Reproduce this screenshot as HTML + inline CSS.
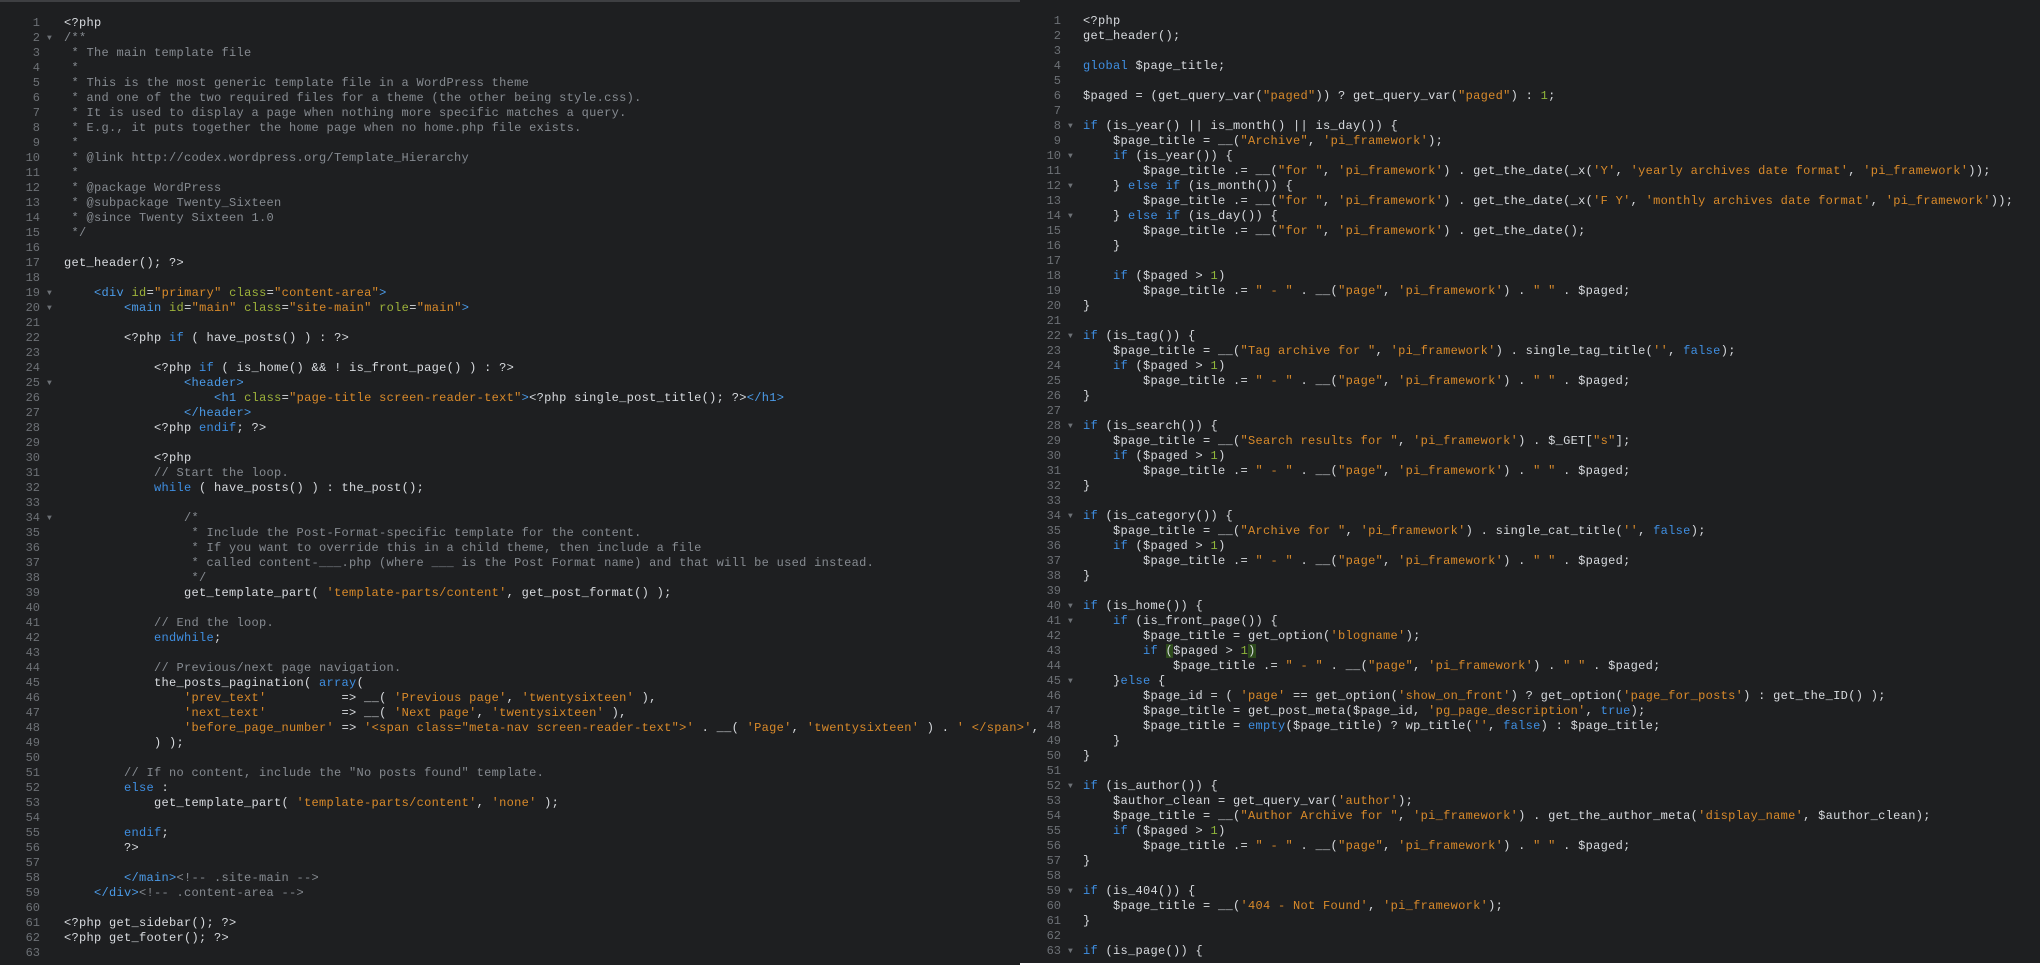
<!DOCTYPE html>
<html><head><meta charset="utf-8"><style>
html,body{margin:0;padding:0;background:#1e1f21;width:2040px;height:965px;overflow:hidden}
.pane{position:absolute;top:0;font-family:"Liberation Mono",monospace;font-size:12px;letter-spacing:0.3px;line-height:15px;color:#d8dbdf}
#L{left:0;width:1020px;height:965px;border-top:2px solid #3e3f42;box-sizing:border-box;padding-top:14px}
#R{left:1020px;width:1020px;height:964px;padding-top:14px;box-sizing:border-box}
#wb{position:absolute;left:1020px;top:963px;width:1020px;height:2px;background:#fff}
.r{position:relative;height:15px}
.g{position:absolute;width:40px;text-align:right;color:#6d7176;top:0;letter-spacing:0}
.f{position:absolute;color:#6d7176;font-size:8px;top:0}
.c0{position:absolute;top:0;white-space:pre}
#L .g{left:0}#L .f{left:47px}#L .c0{left:64px}
#R .g{left:0;width:41px}#R .f{left:48px}#R .c0{left:63px}
.k{color:#3f8fe2}.s{color:#d98a2a}.n{color:#8fb53a}.c{color:#868b91}.a{color:#9db23a}.t{color:#4b9be8}
.h{background:#2d4a1c}
</style></head><body>
<div class="pane" id="L">
<div class="r"><span class="g">1</span><span class="c0">&lt;?php</span></div>
<div class="r"><span class="g">2</span><span class="f">▼</span><span class="c0 c">/**</span></div>
<div class="r"><span class="g">3</span><span class="c0 c"> * The main template file</span></div>
<div class="r"><span class="g">4</span><span class="c0 c"> *</span></div>
<div class="r"><span class="g">5</span><span class="c0 c"> * This is the most generic template file in a WordPress theme</span></div>
<div class="r"><span class="g">6</span><span class="c0 c"> * and one of the two required files for a theme (the other being style.css).</span></div>
<div class="r"><span class="g">7</span><span class="c0 c"> * It is used to display a page when nothing more specific matches a query.</span></div>
<div class="r"><span class="g">8</span><span class="c0 c"> * E.g., it puts together the home page when no home.php file exists.</span></div>
<div class="r"><span class="g">9</span><span class="c0 c"> *</span></div>
<div class="r"><span class="g">10</span><span class="c0 c"> * @link http://codex.wordpress.org/Template_Hierarchy</span></div>
<div class="r"><span class="g">11</span><span class="c0 c"> *</span></div>
<div class="r"><span class="g">12</span><span class="c0 c"> * @package WordPress</span></div>
<div class="r"><span class="g">13</span><span class="c0 c"> * @subpackage Twenty_Sixteen</span></div>
<div class="r"><span class="g">14</span><span class="c0 c"> * @since Twenty Sixteen 1.0</span></div>
<div class="r"><span class="g">15</span><span class="c0 c"> */</span></div>
<div class="r"><span class="g">16</span></div>
<div class="r"><span class="g">17</span><span class="c0">get_header(); ?&gt;</span></div>
<div class="r"><span class="g">18</span></div>
<div class="r"><span class="g">19</span><span class="f">▼</span><span class="c0">    <span class="t">&lt;div</span> <span class="a">id</span>=<span class="s">"primary"</span> <span class="a">class</span>=<span class="s">"content-area"</span><span class="t">&gt;</span></span></div>
<div class="r"><span class="g">20</span><span class="f">▼</span><span class="c0">        <span class="t">&lt;main</span> <span class="a">id</span>=<span class="s">"main"</span> <span class="a">class</span>=<span class="s">"site-main"</span> <span class="a">role</span>=<span class="s">"main"</span><span class="t">&gt;</span></span></div>
<div class="r"><span class="g">21</span></div>
<div class="r"><span class="g">22</span><span class="c0">        &lt;?php <span class="k">if</span> ( have_posts() ) : ?&gt;</span></div>
<div class="r"><span class="g">23</span></div>
<div class="r"><span class="g">24</span><span class="c0">            &lt;?php <span class="k">if</span> ( is_home() &amp;&amp; ! is_front_page() ) : ?&gt;</span></div>
<div class="r"><span class="g">25</span><span class="f">▼</span><span class="c0">                <span class="t">&lt;header&gt;</span></span></div>
<div class="r"><span class="g">26</span><span class="c0">                    <span class="t">&lt;h1</span> <span class="a">class</span>=<span class="s">"page-title screen-reader-text"</span><span class="t">&gt;</span>&lt;?php single_post_title(); ?&gt;<span class="t">&lt;/h1&gt;</span></span></div>
<div class="r"><span class="g">27</span><span class="c0">                <span class="t">&lt;/header&gt;</span></span></div>
<div class="r"><span class="g">28</span><span class="c0">            &lt;?php <span class="k">endif</span>; ?&gt;</span></div>
<div class="r"><span class="g">29</span></div>
<div class="r"><span class="g">30</span><span class="c0">            &lt;?php</span></div>
<div class="r"><span class="g">31</span><span class="c0 c">            // Start the loop.</span></div>
<div class="r"><span class="g">32</span><span class="c0">            <span class="k">while</span> ( have_posts() ) : the_post();</span></div>
<div class="r"><span class="g">33</span></div>
<div class="r"><span class="g">34</span><span class="f">▼</span><span class="c0 c">                /*</span></div>
<div class="r"><span class="g">35</span><span class="c0 c">                 * Include the Post-Format-specific template for the content.</span></div>
<div class="r"><span class="g">36</span><span class="c0 c">                 * If you want to override this in a child theme, then include a file</span></div>
<div class="r"><span class="g">37</span><span class="c0 c">                 * called content-___.php (where ___ is the Post Format name) and that will be used instead.</span></div>
<div class="r"><span class="g">38</span><span class="c0 c">                 */</span></div>
<div class="r"><span class="g">39</span><span class="c0">                get_template_part( <span class="s">'template-parts/content'</span>, get_post_format() );</span></div>
<div class="r"><span class="g">40</span></div>
<div class="r"><span class="g">41</span><span class="c0 c">            // End the loop.</span></div>
<div class="r"><span class="g">42</span><span class="c0">            <span class="k">endwhile</span>;</span></div>
<div class="r"><span class="g">43</span></div>
<div class="r"><span class="g">44</span><span class="c0 c">            // Previous/next page navigation.</span></div>
<div class="r"><span class="g">45</span><span class="c0">            the_posts_pagination( <span class="k">array</span>(</span></div>
<div class="r"><span class="g">46</span><span class="c0">                <span class="s">'prev_text'</span>          =&gt; __( <span class="s">'Previous page'</span>, <span class="s">'twentysixteen'</span> ),</span></div>
<div class="r"><span class="g">47</span><span class="c0">                <span class="s">'next_text'</span>          =&gt; __( <span class="s">'Next page'</span>, <span class="s">'twentysixteen'</span> ),</span></div>
<div class="r"><span class="g">48</span><span class="c0">                <span class="s">'before_page_number'</span> =&gt; <span class="s">'&lt;span class="meta-nav screen-reader-text"&gt;'</span> . __( <span class="s">'Page'</span>, <span class="s">'twentysixteen'</span> ) . <span class="s">' &lt;/span&gt;'</span>,</span></div>
<div class="r"><span class="g">49</span><span class="c0">            ) );</span></div>
<div class="r"><span class="g">50</span></div>
<div class="r"><span class="g">51</span><span class="c0 c">        // If no content, include the "No posts found" template.</span></div>
<div class="r"><span class="g">52</span><span class="c0">        <span class="k">else</span> :</span></div>
<div class="r"><span class="g">53</span><span class="c0">            get_template_part( <span class="s">'template-parts/content'</span>, <span class="s">'none'</span> );</span></div>
<div class="r"><span class="g">54</span></div>
<div class="r"><span class="g">55</span><span class="c0">        <span class="k">endif</span>;</span></div>
<div class="r"><span class="g">56</span><span class="c0">        ?&gt;</span></div>
<div class="r"><span class="g">57</span></div>
<div class="r"><span class="g">58</span><span class="c0">        <span class="t">&lt;/main&gt;</span><span class="c">&lt;!-- .site-main --&gt;</span></span></div>
<div class="r"><span class="g">59</span><span class="c0">    <span class="t">&lt;/div&gt;</span><span class="c">&lt;!-- .content-area --&gt;</span></span></div>
<div class="r"><span class="g">60</span></div>
<div class="r"><span class="g">61</span><span class="c0">&lt;?php get_sidebar(); ?&gt;</span></div>
<div class="r"><span class="g">62</span><span class="c0">&lt;?php get_footer(); ?&gt;</span></div>
<div class="r"><span class="g">63</span></div>
</div>

<div class="pane" id="R">
<div class="r"><span class="g">1</span><span class="c0">&lt;?php</span></div>
<div class="r"><span class="g">2</span><span class="c0">get_header();</span></div>
<div class="r"><span class="g">3</span></div>
<div class="r"><span class="g">4</span><span class="c0"><span class="k">global</span> $page_title;</span></div>
<div class="r"><span class="g">5</span></div>
<div class="r"><span class="g">6</span><span class="c0">$paged = (get_query_var(<span class="s">"paged"</span>)) ? get_query_var(<span class="s">"paged"</span>) : <span class="n">1</span>;</span></div>
<div class="r"><span class="g">7</span></div>
<div class="r"><span class="g">8</span><span class="f">▼</span><span class="c0"><span class="k">if</span> (is_year() || is_month() || is_day()) {</span></div>
<div class="r"><span class="g">9</span><span class="c0">    $page_title = __(<span class="s">"Archive"</span>, <span class="s">'pi_framework'</span>);</span></div>
<div class="r"><span class="g">10</span><span class="f">▼</span><span class="c0">    <span class="k">if</span> (is_year()) {</span></div>
<div class="r"><span class="g">11</span><span class="c0">        $page_title .= __(<span class="s">"for "</span>, <span class="s">'pi_framework'</span>) . get_the_date(_x(<span class="s">'Y'</span>, <span class="s">'yearly archives date format'</span>, <span class="s">'pi_framework'</span>));</span></div>
<div class="r"><span class="g">12</span><span class="f">▼</span><span class="c0">    } <span class="k">else if</span> (is_month()) {</span></div>
<div class="r"><span class="g">13</span><span class="c0">        $page_title .= __(<span class="s">"for "</span>, <span class="s">'pi_framework'</span>) . get_the_date(_x(<span class="s">'F Y'</span>, <span class="s">'monthly archives date format'</span>, <span class="s">'pi_framework'</span>));</span></div>
<div class="r"><span class="g">14</span><span class="f">▼</span><span class="c0">    } <span class="k">else if</span> (is_day()) {</span></div>
<div class="r"><span class="g">15</span><span class="c0">        $page_title .= __(<span class="s">"for "</span>, <span class="s">'pi_framework'</span>) . get_the_date();</span></div>
<div class="r"><span class="g">16</span><span class="c0">    }</span></div>
<div class="r"><span class="g">17</span></div>
<div class="r"><span class="g">18</span><span class="c0">    <span class="k">if</span> ($paged &gt; <span class="n">1</span>)</span></div>
<div class="r"><span class="g">19</span><span class="c0">        $page_title .= <span class="s">" - "</span> . __(<span class="s">"page"</span>, <span class="s">'pi_framework'</span>) . <span class="s">" "</span> . $paged;</span></div>
<div class="r"><span class="g">20</span><span class="c0">}</span></div>
<div class="r"><span class="g">21</span></div>
<div class="r"><span class="g">22</span><span class="f">▼</span><span class="c0"><span class="k">if</span> (is_tag()) {</span></div>
<div class="r"><span class="g">23</span><span class="c0">    $page_title = __(<span class="s">"Tag archive for "</span>, <span class="s">'pi_framework'</span>) . single_tag_title(<span class="s">''</span>, <span class="k">false</span>);</span></div>
<div class="r"><span class="g">24</span><span class="c0">    <span class="k">if</span> ($paged &gt; <span class="n">1</span>)</span></div>
<div class="r"><span class="g">25</span><span class="c0">        $page_title .= <span class="s">" - "</span> . __(<span class="s">"page"</span>, <span class="s">'pi_framework'</span>) . <span class="s">" "</span> . $paged;</span></div>
<div class="r"><span class="g">26</span><span class="c0">}</span></div>
<div class="r"><span class="g">27</span></div>
<div class="r"><span class="g">28</span><span class="f">▼</span><span class="c0"><span class="k">if</span> (is_search()) {</span></div>
<div class="r"><span class="g">29</span><span class="c0">    $page_title = __(<span class="s">"Search results for "</span>, <span class="s">'pi_framework'</span>) . $_GET[<span class="s">"s"</span>];</span></div>
<div class="r"><span class="g">30</span><span class="c0">    <span class="k">if</span> ($paged &gt; <span class="n">1</span>)</span></div>
<div class="r"><span class="g">31</span><span class="c0">        $page_title .= <span class="s">" - "</span> . __(<span class="s">"page"</span>, <span class="s">'pi_framework'</span>) . <span class="s">" "</span> . $paged;</span></div>
<div class="r"><span class="g">32</span><span class="c0">}</span></div>
<div class="r"><span class="g">33</span></div>
<div class="r"><span class="g">34</span><span class="f">▼</span><span class="c0"><span class="k">if</span> (is_category()) {</span></div>
<div class="r"><span class="g">35</span><span class="c0">    $page_title = __(<span class="s">"Archive for "</span>, <span class="s">'pi_framework'</span>) . single_cat_title(<span class="s">''</span>, <span class="k">false</span>);</span></div>
<div class="r"><span class="g">36</span><span class="c0">    <span class="k">if</span> ($paged &gt; <span class="n">1</span>)</span></div>
<div class="r"><span class="g">37</span><span class="c0">        $page_title .= <span class="s">" - "</span> . __(<span class="s">"page"</span>, <span class="s">'pi_framework'</span>) . <span class="s">" "</span> . $paged;</span></div>
<div class="r"><span class="g">38</span><span class="c0">}</span></div>
<div class="r"><span class="g">39</span></div>
<div class="r"><span class="g">40</span><span class="f">▼</span><span class="c0"><span class="k">if</span> (is_home()) {</span></div>
<div class="r"><span class="g">41</span><span class="f">▼</span><span class="c0">    <span class="k">if</span> (is_front_page()) {</span></div>
<div class="r"><span class="g">42</span><span class="c0">        $page_title = get_option(<span class="s">'blogname'</span>);</span></div>
<div class="r"><span class="g">43</span><span class="c0">        <span class="k">if</span> <span class="h">(</span>$paged &gt; <span class="n">1</span><span class="h">)</span></span></div>
<div class="r"><span class="g">44</span><span class="c0">            $page_title .= <span class="s">" - "</span> . __(<span class="s">"page"</span>, <span class="s">'pi_framework'</span>) . <span class="s">" "</span> . $paged;</span></div>
<div class="r"><span class="g">45</span><span class="f">▼</span><span class="c0">    }<span class="k">else</span> {</span></div>
<div class="r"><span class="g">46</span><span class="c0">        $page_id = ( <span class="s">'page'</span> == get_option(<span class="s">'show_on_front'</span>) ? get_option(<span class="s">'page_for_posts'</span>) : get_the_ID() );</span></div>
<div class="r"><span class="g">47</span><span class="c0">        $page_title = get_post_meta($page_id, <span class="s">'pg_page_description'</span>, <span class="k">true</span>);</span></div>
<div class="r"><span class="g">48</span><span class="c0">        $page_title = <span class="k">empty</span>($page_title) ? wp_title(<span class="s">''</span>, <span class="k">false</span>) : $page_title;</span></div>
<div class="r"><span class="g">49</span><span class="c0">    }</span></div>
<div class="r"><span class="g">50</span><span class="c0">}</span></div>
<div class="r"><span class="g">51</span></div>
<div class="r"><span class="g">52</span><span class="f">▼</span><span class="c0"><span class="k">if</span> (is_author()) {</span></div>
<div class="r"><span class="g">53</span><span class="c0">    $author_clean = get_query_var(<span class="s">'author'</span>);</span></div>
<div class="r"><span class="g">54</span><span class="c0">    $page_title = __(<span class="s">"Author Archive for "</span>, <span class="s">'pi_framework'</span>) . get_the_author_meta(<span class="s">'display_name'</span>, $author_clean);</span></div>
<div class="r"><span class="g">55</span><span class="c0">    <span class="k">if</span> ($paged &gt; <span class="n">1</span>)</span></div>
<div class="r"><span class="g">56</span><span class="c0">        $page_title .= <span class="s">" - "</span> . __(<span class="s">"page"</span>, <span class="s">'pi_framework'</span>) . <span class="s">" "</span> . $paged;</span></div>
<div class="r"><span class="g">57</span><span class="c0">}</span></div>
<div class="r"><span class="g">58</span></div>
<div class="r"><span class="g">59</span><span class="f">▼</span><span class="c0"><span class="k">if</span> (is_404()) {</span></div>
<div class="r"><span class="g">60</span><span class="c0">    $page_title = __(<span class="s">'404 - Not Found'</span>, <span class="s">'pi_framework'</span>);</span></div>
<div class="r"><span class="g">61</span><span class="c0">}</span></div>
<div class="r"><span class="g">62</span></div>
<div class="r"><span class="g">63</span><span class="f">▼</span><span class="c0"><span class="k">if</span> (is_page()) {</span></div>
</div>
<div id="wb"></div>
</body></html>
